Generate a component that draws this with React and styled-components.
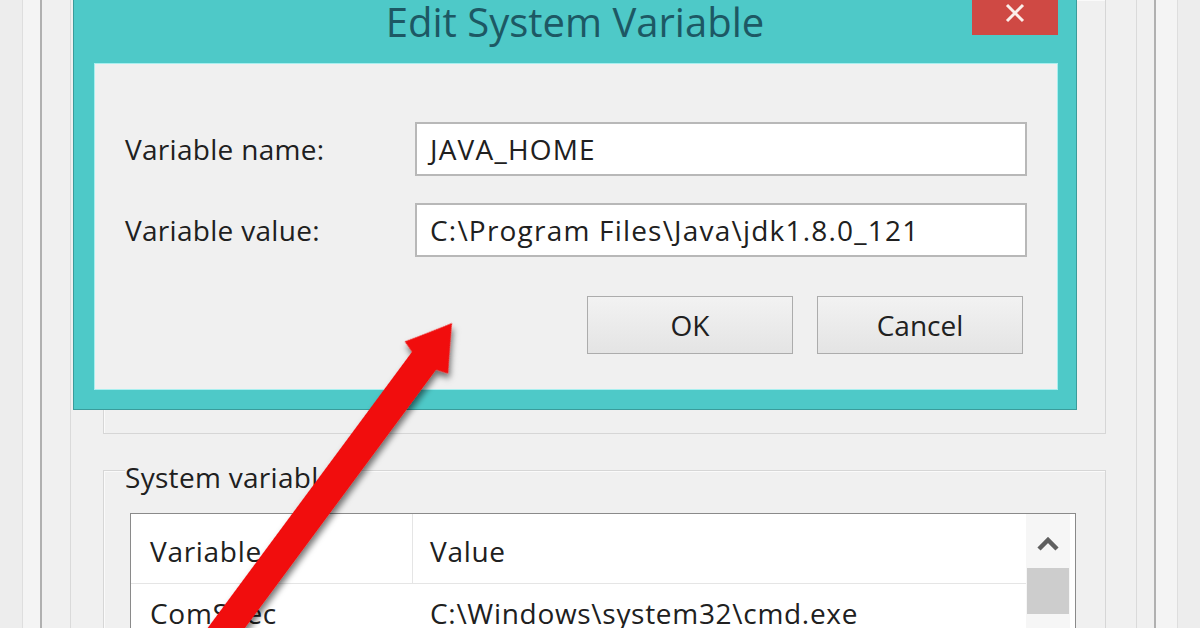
import React from "react";
import styled, { createGlobalStyle } from "styled-components";

const GlobalStyle = createGlobalStyle`
  html, body { margin: 0; padding: 0; background: #eeeeee; }
  * { box-sizing: border-box; }
`;

const Page = styled.div`
  position: relative;
  width: 1200px;
  height: 628px;
  overflow: hidden;
  display: flex;
  padding: 0 22px;
  background: #ededed;
  font-family: "Open Sans", "Noto Sans", sans-serif;
  color: #202020;
`;

const Desk = styled.div`
  flex: 1;
  display: flex;
  padding: 0 21px 0 17px;
  background: #f4f4f4;
  border-left: 1px solid #dedede;
  border-right: 1px solid #dedede;
`;

const BackWindow = styled.div`
  flex: 1;
  display: flex;
  padding: 0 17px 0 28px;
  background: #f0f0f0;
  border-left: 2px solid #b0b0b0;
  border-right: 2px solid #b0b0b0;
`;

const BackPanel = styled.div`
  flex: 1;
  display: flex;
  flex-direction: column;
  padding: 0 30px 0 32px;
  border-left: 1px solid #dadada;
  border-right: 1px solid #dadada;
`;

const GroupBox = styled.div`
  display: flex;
  flex-direction: column;
  border: 1px solid #d6d6d6;
  border-top: ${(p) => (p.$open ? "none" : "1px solid #d6d6d6")};
  box-shadow: inset 1px 1px 0 #fafafa;
  height: ${(p) => p.$height || "auto"};
  margin-top: ${(p) => p.$mt || "0"};
  flex: ${(p) => (p.$grow ? 1 : "none")};
`;

const Caption = styled.div`
  align-self: flex-start;
  margin: -8px 0 0 21px;
  padding: 0 2px 0 0;
  background: #f0f0f0;
  font-size: 28px;
  line-height: 28px;
  letter-spacing: 0.3px;
`;

const ListBox = styled.div`
  flex: 1;
  display: flex;
  margin: 22px 29px 0 26px;
  background: #ffffff;
  border: 1px solid #8a8a8a;
  border-bottom: none;
`;

const Table = styled.div`
  flex: 1;
  display: flex;
  flex-direction: column;
`;

const Row = styled.div`
  display: flex;
  height: ${(p) => p.$h}px;
  align-items: center;
  border-bottom: ${(p) => (p.$header ? "1px solid #e5e5e5" : "none")};
  font-size: 28px;
  letter-spacing: 0.7px;
`;

const Cell = styled.div`
  height: 100%;
  display: flex;
  align-items: center;
  white-space: nowrap;
  width: ${(p) => (p.$w ? p.$w + "px" : "auto")};
  flex: ${(p) => (p.$w ? "none" : 1)};
  padding-left: ${(p) => p.$pl}px;
  padding-top: ${(p) => p.$pt || 0}px;
  border-right: ${(p) => (p.$divider ? "1px solid #e5e5e5" : "none")};
`;

const ScrollBar = styled.div`
  width: 44px;
  margin-right: 5px;
  display: flex;
  flex-direction: column;
  align-items: center;
  background: #f6f6f6;
`;

const ScrollUp = styled.div`
  height: 54px;
  width: 100%;
  display: flex;
  align-items: center;
  justify-content: center;
  padding-top: 6px;
`;

const Thumb = styled.div`
  width: 42px;
  height: 46px;
  background: #cdcdcd;
`;

const Dialog = styled.div`
  position: absolute;
  left: 73px;
  top: -12px;
  width: 1004px;
  height: 422px;
  display: flex;
  flex-direction: column;
  background: #4ec9c8;
  border: 1px solid #3a9c9b;
  z-index: 2;
`;

const TitleBar = styled.div`
  position: relative;
  height: 75px;
  padding-top: 13px;
  text-align: center;
  font-size: 40px;
  line-height: 40px;
  color: #1d5864;
`;

const CloseButton = styled.div`
  position: absolute;
  top: 0;
  right: 18px;
  width: 86px;
  height: 46px;
  display: flex;
  align-items: center;
  justify-content: center;
  padding-top: 2px;
  background: #cf4944;
`;

const Body = styled.div`
  flex: 1;
  display: flex;
  padding: 0 19px 20px 21px;
`;

const Panel = styled.div`
  flex: 1;
  display: flex;
  flex-direction: column;
  padding: 58px 30px 0 30px;
  background: #f0f0f0;
  box-shadow: 0 0 0 1px #a8efef;
`;

const FieldRow = styled.div`
  display: flex;
  align-items: center;
  height: 54px;
  margin-top: ${(p) => p.$mt || 0}px;
`;

const Label = styled.div`
  width: 290px;
  font-size: 28px;
  letter-spacing: 0.3px;
  white-space: nowrap;
`;

const TextBox = styled.div`
  width: 612px;
  height: 54px;
  display: flex;
  align-items: center;
  padding-left: 13px;
  background: #ffffff;
  border: 2px solid #b8b8b8;
  font-size: 28px;
  letter-spacing: 1.2px;
  white-space: nowrap;
`;

const ButtonRow = styled.div`
  display: flex;
  justify-content: flex-end;
  gap: 24px;
  margin-top: 39px;
  padding-right: 4px;
`;

const Button = styled.div`
  width: 206px;
  height: 58px;
  display: flex;
  align-items: center;
  justify-content: center;
  font-size: 28px;
  background: linear-gradient(#f2f2f2, #e4e4e4);
  border: 1px solid #acacac;
`;

const Overlay = styled.svg`
  position: absolute;
  left: 0;
  top: 0;
  width: 1200px;
  height: 628px;
  z-index: 3;
  pointer-events: none;
`;

function Arrow() {
  return (
    <Overlay viewBox="0 0 1200 628">
      <defs>
        <filter id="shadow" x="-20%" y="-20%" width="140%" height="140%">
          <feDropShadow dx="4" dy="3" stdDeviation="3" floodColor="#000" floodOpacity="0.55" />
        </filter>
      </defs>
      <g transform="translate(452 323) rotate(36.5)" filter="url(#shadow)">
        <path
          d="M0 0 Q12 20 27 43 L15 47 L15 460 L-15 460 L-15 47 L-27 43 Q-12 20 0 0 Z"
          fill="#f10e0e"
        />
      </g>
    </Overlay>
  );
}

export default function App() {
  return (
    <>
      <GlobalStyle />
      <Page>
        <Desk>
          <BackWindow>
            <BackPanel>
              <GroupBox $open $height="434px" />
              <GroupBox $mt="36px" $grow>
                <Caption>System variables</Caption>
                <ListBox>
                  <Table>
                    <Row $h={70} $header>
                      <Cell $w={282} $pl={19} $pt={4} $divider>Variable</Cell>
                      <Cell $pl={17} $pt={4}>Value</Cell>
                    </Row>
                    <Row $h={58}>
                      <Cell $w={282} $pl={19}>ComSpec</Cell>
                      <Cell $pl={17}>C:\Windows\system32\cmd.exe</Cell>
                    </Row>
                  </Table>
                  <ScrollBar>
                    <ScrollUp>
                      <svg width="24" height="14" viewBox="0 0 24 14">
                        <polyline points="3,12 12,3 21,12" fill="none" stroke="#5f5f5f" strokeWidth="4.5" />
                      </svg>
                    </ScrollUp>
                    <Thumb />
                  </ScrollBar>
                </ListBox>
              </GroupBox>
            </BackPanel>
          </BackWindow>
        </Desk>

        <Dialog>
          <TitleBar>
            Edit System Variable
            <CloseButton>
              <svg width="22" height="20" viewBox="0 0 22 20">
                <path d="M3 2 L19 18 M19 2 L3 18" stroke="#fbeeea" strokeWidth="3" />
              </svg>
            </CloseButton>
          </TitleBar>
          <Body>
            <Panel>
              <FieldRow>
                <Label>Variable name:</Label>
                <TextBox>JAVA_HOME</TextBox>
              </FieldRow>
              <FieldRow $mt={27}>
                <Label>Variable value:</Label>
                <TextBox>C:\Program Files\Java\jdk1.8.0_121</TextBox>
              </FieldRow>
              <ButtonRow>
                <Button>OK</Button>
                <Button>Cancel</Button>
              </ButtonRow>
            </Panel>
          </Body>
        </Dialog>

        <Arrow />
      </Page>
    </>
  );
}
